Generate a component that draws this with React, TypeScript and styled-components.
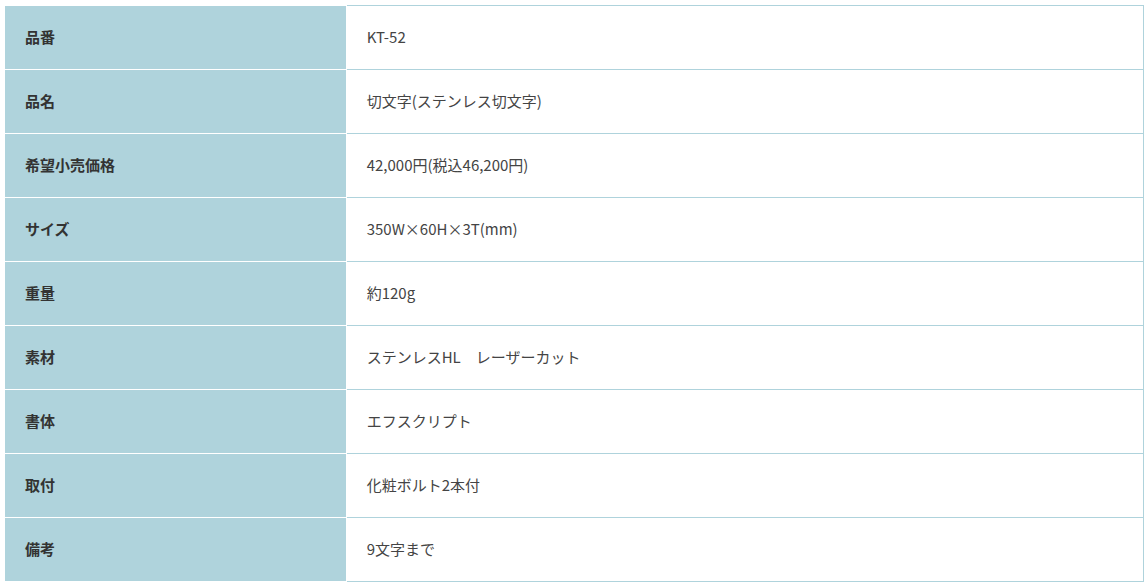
import React from 'react'
import styled, { createGlobalStyle } from 'styled-components'

const GlobalStyle = createGlobalStyle`
  body {
    margin: 0;
    background: #fff;
    font-family: 'Noto Sans CJK JP', 'Noto Sans', sans-serif;
  }
`

const Wrapper = styled.div`
  padding: 5px 4px 0 4px;
`

const SpecTable = styled.table`
  width: 1140px;
  border-collapse: collapse;
  table-layout: fixed;
`

const Label = styled.th`
  width: 30%;
  height: 64px;
  padding: 0 20px 2px;
  box-sizing: border-box;
  background: #afd3dc;
  border: 1px solid #fff;
  color: #333;
  font-size: 15px;
  font-weight: 700;
  text-align: left;
  vertical-align: middle;
`

const Value = styled.td`
  height: 64px;
  padding: 0 20px 2px;
  box-sizing: border-box;
  background: #fff;
  border: 1px solid #afd3dc;
  color: #444;
  font-size: 15px;
  font-weight: 400;
  vertical-align: middle;
`

const rows: [string, string][] = [
  ['品番', 'KT-52'],
  ['品名', '切文字(ステンレス切文字)'],
  ['希望小売価格', '42,000円(税込46,200円)'],
  ['サイズ', '350W×60H×3T(mm)'],
  ['重量', '約120g'],
  ['素材', 'ステンレスHL　レーザーカット'],
  ['書体', 'エフスクリプト'],
  ['取付', '化粧ボルト2本付'],
  ['備考', '9文字まで'],
]

const App = () => (
  <Wrapper>
    <GlobalStyle />
    <SpecTable>
      <tbody>
        {rows.map(([label, value]) => (
          <tr key={label}>
            <Label>{label}</Label>
            <Value>{value}</Value>
          </tr>
        ))}
      </tbody>
    </SpecTable>
  </Wrapper>
)

export default App
